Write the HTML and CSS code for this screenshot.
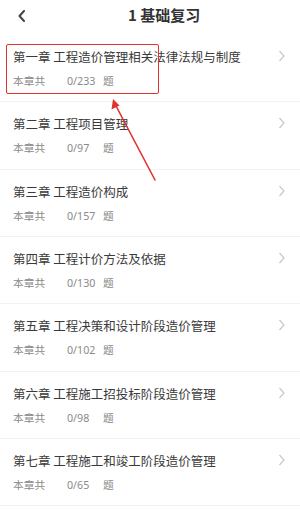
FILE: index.html
```html
<!DOCTYPE html>
<html lang="zh">
<head>
<meta charset="utf-8">
<link rel="stylesheet" href="styles.css">
</head>
<body>
<div class="page">
  <header class="bar">
    <svg class="back" width="10" height="12" viewBox="0 0 10 12"><path d="M7 1 L2.5 6 L7 11" fill="none" stroke="#444" stroke-width="2" stroke-linecap="round" stroke-linejoin="round"/></svg>
    <h1 class="title">1 基础复习</h1>
  </header>
  <ul class="list">
    <li class="item"><div class="txt"><div class="name">第一章 工程造价管理相关法律法规与制度</div><div class="meta"><span class="lbl">本章共</span><span class="cnt">0/233</span><span>题</span></div></div><svg class="chev" width="8" height="12" viewBox="0 0 8 12"><path d="M1.5 1 L6 6 L1.5 11" fill="none" stroke="#c8c8c8" stroke-width="1.2"/></svg></li>
    <li class="item"><div class="txt"><div class="name">第二章 工程项目管理</div><div class="meta"><span class="lbl">本章共</span><span class="cnt">0/97</span><span>题</span></div></div><svg class="chev" width="8" height="12" viewBox="0 0 8 12"><path d="M1.5 1 L6 6 L1.5 11" fill="none" stroke="#c8c8c8" stroke-width="1.2"/></svg></li>
    <li class="item"><div class="txt"><div class="name">第三章 工程造价构成</div><div class="meta"><span class="lbl">本章共</span><span class="cnt">0/157</span><span>题</span></div></div><svg class="chev" width="8" height="12" viewBox="0 0 8 12"><path d="M1.5 1 L6 6 L1.5 11" fill="none" stroke="#c8c8c8" stroke-width="1.2"/></svg></li>
    <li class="item"><div class="txt"><div class="name">第四章 工程计价方法及依据</div><div class="meta"><span class="lbl">本章共</span><span class="cnt">0/130</span><span>题</span></div></div><svg class="chev" width="8" height="12" viewBox="0 0 8 12"><path d="M1.5 1 L6 6 L1.5 11" fill="none" stroke="#c8c8c8" stroke-width="1.2"/></svg></li>
    <li class="item"><div class="txt"><div class="name">第五章 工程决策和设计阶段造价管理</div><div class="meta"><span class="lbl">本章共</span><span class="cnt">0/102</span><span>题</span></div></div><svg class="chev" width="8" height="12" viewBox="0 0 8 12"><path d="M1.5 1 L6 6 L1.5 11" fill="none" stroke="#c8c8c8" stroke-width="1.2"/></svg></li>
    <li class="item"><div class="txt"><div class="name">第六章 工程施工招投标阶段造价管理</div><div class="meta"><span class="lbl">本章共</span><span class="cnt">0/98</span><span>题</span></div></div><svg class="chev" width="8" height="12" viewBox="0 0 8 12"><path d="M1.5 1 L6 6 L1.5 11" fill="none" stroke="#c8c8c8" stroke-width="1.2"/></svg></li>
    <li class="item"><div class="txt"><div class="name">第七章 工程施工和竣工阶段造价管理</div><div class="meta"><span class="lbl">本章共</span><span class="cnt">0/65</span><span>题</span></div></div><svg class="chev" width="8" height="12" viewBox="0 0 8 12"><path d="M1.5 1 L6 6 L1.5 11" fill="none" stroke="#c8c8c8" stroke-width="1.2"/></svg></li>
  </ul>
  <div class="mark"></div>
  <svg class="arrow" width="300" height="510" viewBox="0 0 300 510">
    <line x1="155" y1="180" x2="115" y2="104" stroke="#e0332c" stroke-width="1.6" stroke-linecap="round"/>
    <path d="M113 99 L111.5 109.5 L119.5 105.5 Z" fill="#e0332c"/>
  </svg>
</div>
</body>
</html>
```

FILE: styles.css
```css
* { box-sizing: border-box; margin: 0; padding: 0; }
html, body { width: 300px; height: 510px; overflow: hidden; background: #fff; }
body { font-family: "Noto Sans CJK SC", "Noto Sans", sans-serif; color: #333; }
.page { position: relative; width: 300px; height: 510px; }
.bar { height: 35px; display: flex; align-items: center; padding-left: 128px; position: relative; }
.back { position: absolute; left: 17px; top: 10px; }
.title { font-size: 15px; font-weight: bold; color: #333; line-height: 20px; margin-top: -5px; }
.list { list-style: none; }
.item { height: 67.33px; display: flex; align-items: flex-start; justify-content: space-between; padding: 12px 14px 0 13px; border-bottom: 1px solid #f3f3f3; }
.txt { display: flex; flex-direction: column; gap: 6px; }
.name { font-size: 12.5px; line-height: 20px; color: #3a3a3a; }
.meta { font-size: 10.7px; line-height: 16px; color: #8a8a8a; display: flex; }
.lbl { width: 54px; }
.cnt { width: 36px; font-family: "Noto Sans", sans-serif; }
.chev { margin-top: 3px; }
.mark { position: absolute; left: 6px; top: 44px; width: 153px; height: 50px; border: 1.5px solid #e0332c; border-radius: 2px; }
.arrow { position: absolute; left: 0; top: 0; pointer-events: none; }
```
